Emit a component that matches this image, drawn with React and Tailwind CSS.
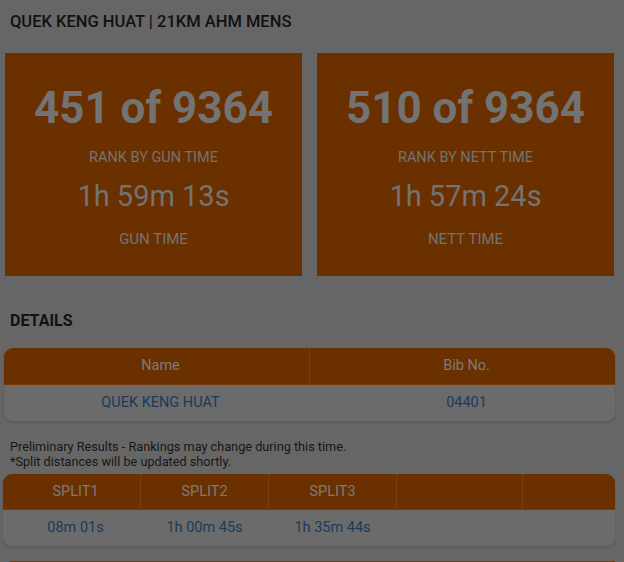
import React from 'react';

const ORANGE = 'bg-[#6b3000]';

const StatPanel = ({ rank, rankLabel, time, timeLabel }) => (
  <div className={`${ORANGE} h-[223px] flex flex-col items-center pt-[29px] text-[#737373]`}>
    <div className="text-[44px] leading-[52px] font-bold">{rank}</div>
    <div className="mt-[14px] text-[14.5px] leading-[20px]">{rankLabel}</div>
    <div className="mt-[10px] text-[29px] leading-[36px]">{time}</div>
    <div className="mt-[15px] text-[15px] leading-[20px]">{timeLabel}</div>
  </div>
);

const splits = [
  { label: 'SPLIT1', value: '08m 01s', w: 'w-[138px] pl-[8px]' },
  { label: 'SPLIT2', value: '1h 00m 45s', w: 'w-[128px]' },
  { label: 'SPLIT3', value: '1h 35m 44s', w: 'w-[128px]' },
  { label: '', value: '', w: 'w-[126px]' },
  { label: '', value: '', w: 'flex-1' },
];

export default function App() {
  return (
    <div className="min-h-[562px] bg-[#666666] overflow-hidden" style={{ fontFamily: 'Roboto, "Liberation Sans", sans-serif' }}>
      <h1 className="pt-[12px] px-[10px] text-[16.5px] leading-[20px] font-medium text-[#111111]">
        QUEK KENG HUAT | 21KM AHM MENS
      </h1>

      <div className="mt-[21px] ml-[5px] mr-[10px] grid grid-cols-2 gap-[15px]">
        <StatPanel rank="451 of 9364" rankLabel="RANK BY GUN TIME" time="1h 59m 13s" timeLabel="GUN TIME" />
        <StatPanel rank="510 of 9364" rankLabel="RANK BY NETT TIME" time="1h 57m 24s" timeLabel="NETT TIME" />
      </div>

      <h2 className="mt-[35px] px-[10px] text-[16px] leading-[20px] font-bold text-[#111111]">DETAILS</h2>

      {/* details table */}
      <div className="mt-[17px] ml-[4px] mr-[9px] rounded-[9px] overflow-hidden shadow-[0_2px_3px_rgba(0,0,0,0.12)]">
        <div className={`${ORANGE} flex h-[37px] border-b border-[#7a3a08] text-[14.5px] text-[#7b7b7b]`}>
          <div className="flex-1 flex items-center justify-center pl-[8px] border-r border-[#77400f]">Name</div>
          <div className="flex-1 flex items-center justify-center pl-[8px]">Bib No.</div>
        </div>
        <div className="flex h-[36px] bg-[#6b6b6b] text-[14.5px] text-[#1b3a5c]">
          <div className="flex-1 flex items-center justify-center pl-[8px] border-r border-[#686868]">QUEK KENG HUAT</div>
          <div className="flex-1 flex items-center justify-center pl-[8px]">04401</div>
        </div>
      </div>

      <div className="mt-[18px] px-[10px] text-[12.7px] leading-[15px] text-[#161616]">
        <p>Preliminary Results - Rankings may change during this time.</p>
        <p>*Split distances will be updated shortly.</p>
      </div>

      {/* splits table */}
      <div className="mt-[5px] ml-[3px] mr-[9px] rounded-[9px] overflow-hidden shadow-[0_2px_3px_rgba(0,0,0,0.12)]">
        <div className={`${ORANGE} flex h-[36px] border-b border-[#7a3a08] text-[14.5px] text-[#7b7b7b]`}>
          {splits.map((s, i) => (
            <div key={i} className={`${s.w} flex items-center justify-center ${i < 4 ? 'border-r border-[#77400f]' : ''}`}>
              {s.label}
            </div>
          ))}
        </div>
        <div className="flex h-[36px] bg-[#6b6b6b] text-[14.5px] text-[#1b3a5c]">
          {splits.map((s, i) => (
            <div key={i} className={`${s.w} flex items-center justify-center ${i < 4 ? 'border-r border-[#686868]' : ''}`}>
              {s.value}
            </div>
          ))}
        </div>
      </div>

      <div className={`mt-[15px] ml-[10px] mr-[9px] h-[20px] ${ORANGE} border-t border-[#7a3a08]`} />
    </div>
  );
}
